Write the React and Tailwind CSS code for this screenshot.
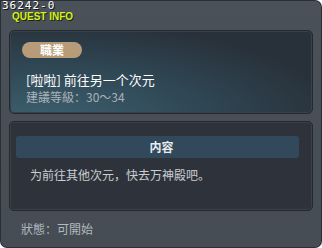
const QuestInfo = () => {
  return (
    <div className="w-[322px] h-[248px] bg-[#2a2f35] p-px rounded-tr-[7px] rounded-b-[7px] font-['Noto_Sans_CJK_SC','Noto_Sans_CJK_TC',sans-serif]">
      <div className="w-full h-full flex flex-col bg-gradient-to-b from-[#4a5158] to-[#454c53] rounded-tr-[6px] rounded-b-[6px]">
        <div className="h-[29px] shrink-0 flex flex-col pl-[1px]">
          <div className="-mt-[1px] text-[11px] leading-[11px] tracking-[1px] text-white [text-shadow:1px_1px_0_#111] font-['DejaVu_Sans_Mono',monospace]">
            36242-0
          </div>
          <div className="mt-[1px] ml-[10px] text-[10px] leading-[10px] font-bold text-[#d6f020] [text-shadow:1px_1px_0_#1b2208] font-['Liberation_Sans',sans-serif]">
            QUEST INFO
          </div>
        </div>

        <div className="mx-[8px] h-[84px] shrink-0 rounded-[5px] border border-[#23292f] bg-[radial-gradient(ellipse_at_10%_110%,#3d6070_0%,#2f4653_45%,#283039_80%)] shadow-[inset_0_0_0_1px_#39414a] px-[12px] pt-[11px]">
          <div className="w-[60px] h-[16px] rounded-full bg-[#b89c79] flex items-center justify-center text-[12px] font-bold text-white">
            職業
          </div>
          <div className="mt-[14px] ml-[4px] text-[13px] leading-[16px] text-white">
            [啦啦] 前往另一个次元
          </div>
          <div className="mt-[1px] ml-[4px] text-[12px] leading-[15px] text-[#aab2b9]">
            建議等級：30～34
          </div>
        </div>

        <div className="mx-[8px] mt-[7px] h-[90px] shrink-0 rounded-[5px] border border-[#23292f] bg-[#2e333b] shadow-[inset_0_0_0_1px_#3a4149] pt-[14px]">
          <div className="ml-[6px] mr-[13px] h-[22px] rounded-[3px] bg-[#31495a] flex items-center justify-center text-[12px] font-bold text-[#e8ecef]">
            <span className="ml-[8px]">内容</span>
          </div>
          <div className="mt-[9px] ml-[20px] text-[12px] leading-[16px] text-[#c9ced3]">
            为前往其他次元，快去万神殿吧。
          </div>
        </div>

        <div className="ml-[20px] mt-[10px] text-[12px] leading-[16px] text-[#b2b8be]">
          狀態：可開始
        </div>
      </div>
    </div>
  );
};

export default function App() {
  return <QuestInfo />;
}
